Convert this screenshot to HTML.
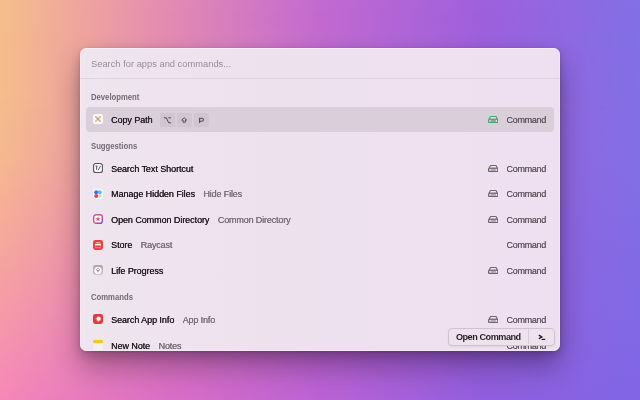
<!DOCTYPE html>
<html><head><meta charset="utf-8">
<style>
html,body{margin:0;padding:0;width:640px;height:400px;overflow:hidden}
body{position:relative;font-family:"Liberation Sans",sans-serif;font-variant-ligatures:none;font-kerning:normal;
background:linear-gradient(to right,#F6BE8B 0%,#E58DB0 25%,#C26AD0 50%,#9E60DC 75%,#8270E6 100%)}
.bgb{position:absolute;left:0;top:0;width:640px;height:400px;
background:linear-gradient(to right,#F587B8 0%,#DA6EC4 25%,#BA62D4 50%,#925EDE 75%,#8066E4 100%);
-webkit-mask-image:linear-gradient(to bottom,rgba(0,0,0,0) 0%,rgba(0,0,0,0.02) 25%,rgba(0,0,0,0.1) 40%,rgba(0,0,0,0.24) 50%,rgba(0,0,0,0.6) 75%,#000 100%);mask-image:linear-gradient(to bottom,rgba(0,0,0,0) 0%,rgba(0,0,0,0.02) 25%,rgba(0,0,0,0.1) 40%,rgba(0,0,0,0.24) 50%,rgba(0,0,0,0.6) 75%,#000 100%)}
.panel{will-change:transform;position:absolute;left:80px;top:48px;width:480px;height:302.5px;border-radius:6.5px;background:linear-gradient(to right,#EFE5EE 0%,#EEE1EE 40%,#EFE0F1 100%);
box-shadow:0 16px 28px rgba(20,0,20,0.32),0 4px 12px rgba(30,0,30,0.2),0 1px 3px rgba(20,0,20,0.15),inset 0 0 0 0.75px rgba(255,255,255,0.45);overflow:hidden}
.t{position:absolute;white-space:nowrap;line-height:20px;height:20px}
.search{left:10.6px;top:5.9px;font-size:9.7px;color:#978D97;letter-spacing:0;transform:scaleX(0.963);transform-origin:0 50%}
.div{position:absolute;left:0;top:30px;width:480px;height:1px;background:#DFD1DF}
.sec{font-size:8.2px;font-weight:700;color:#746A74;letter-spacing:0;left:10.5px;transform:scaleX(0.94);transform-origin:0 50%}
.row{position:absolute;left:6.75px;width:467px;height:25.5px}
.selbg{position:absolute;left:6.1px;top:58.9px;width:467.6px;height:25.2px;background:#DACEDA;border-radius:4px}
.row .ic{position:absolute;left:6.25px;top:7.3px;width:10px;height:10px}
.row .tt{position:absolute;left:24.25px;top:1px;line-height:25.5px;font-size:9px;color:#1E181E;white-space:nowrap;letter-spacing:-0.06px;text-shadow:0.2px 0 0 #1E181E}
.row .st{font-size:9px;color:#776D77;text-shadow:0.1px 0 0 #776D77;letter-spacing:-0.15px;margin-left:8.5px}
.row .cm{position:absolute;left:419.75px;top:1px;line-height:25.5px;font-size:9px;color:#625862;white-space:nowrap;letter-spacing:-0.3px;text-shadow:0.12px 0 0 #625862}
.row .ext{position:absolute;left:401px;top:9px;width:10.5px;height:7.2px}
.kc{position:absolute;top:6.5px;width:14.75px;height:13.6px;background:#D1C5D1;border-radius:2px;font-size:8px;color:#5A525A;text-align:center;line-height:13px}
.kc svg{display:block;position:absolute;left:0;top:0.6px}
.btn{position:absolute;left:367.6px;top:280px;width:107px;height:17.5px;box-sizing:border-box;border:1px solid #CFC3CF;border-radius:4px;background:#EEE2EE;box-shadow:0 1px 2px rgba(0,0,0,0.06)}
.btn .l{position:absolute;left:7.3px;top:1.4px;line-height:15.5px;font-size:9.1px;font-weight:700;color:#231C23;letter-spacing:-0.45px}
.btn .sep{position:absolute;left:79.65px;top:0;width:1px;height:15.25px;background:#D8CCD8}
.btn .r{position:absolute;left:88px;top:0;line-height:15.25px;font-size:8px;font-weight:700;color:#231C23}
</style></head><body>
<div class="bgb"></div>
<div class="panel">
  <div class="t search">Search for apps and commands...</div>
  <div class="div"></div>

  <div class="t sec" style="top:40.2px">Development</div>
  <div class="selbg"></div>
  <div class="row sel" style="top:58.75px">
    <svg class="ic" viewBox="0 0 10 10"><rect x="0" y="0" width="10" height="10" rx="2" fill="#FBF8FB"/><path d="M2.8 2.8 L7.2 7.2" stroke="#A8ACBC" stroke-width="1.5" stroke-linecap="round"/><path d="M2.6 7.4 L7.4 2.6" stroke="#F6BC70" stroke-width="1.7" stroke-linecap="round"/><circle cx="5" cy="5" r="0.8" fill="#DA7068"/></svg>
    <div class="tt">Copy Path</div>
    <div class="kc" style="left:73.65px"><svg viewBox="0 0 14.75 13" width="14.75" height="13"><path d="M3.9 3.8 H6.3 L8.7 8.8 H10.9 M8.4 3.8 H10.9" fill="none" stroke="#4E464E" stroke-width="1"/></svg></div>
    <div class="kc" style="left:90.65px"><svg viewBox="0 0 14.75 13" width="14.75" height="13"><path d="M7.2 3.75 L9.7 6.0 H8.35 V8.25 H6.05 V6.0 H4.7 Z" fill="none" stroke="#4A424A" stroke-width="0.85" stroke-linejoin="miter" stroke-miterlimit="10"/></svg></div>
    <div class="kc" style="left:107.55px"><svg viewBox="0 0 14.75 13" width="14.75" height="13"><path d="M5.6 9.0 V4.3 H7.6 Q9.4 4.3 9.4 5.75 Q9.4 7.2 7.6 7.2 H5.6" fill="none" stroke="#504850" stroke-width="1.1"/></svg></div>
    <svg class="ext" viewBox="0 0 10.5 7.2"><path d="M2.5 0.55 H8 L9.5 3.3 H1 Z" fill="#F3ECF3" fill-opacity="0.6" stroke="#4BA85E" stroke-width="1.1" stroke-linejoin="round"/><rect x="0.55" y="3.3" width="9.4" height="3.35" rx="1.1" fill="#A896A8" stroke="#4BA85E" stroke-width="1.1"/><rect x="1.5" y="4.1" width="1.2" height="1.4" fill="#F6F0F6"/><rect x="7.8" y="4.1" width="1.2" height="1.4" fill="#F6F0F6"/></svg>
    <div class="cm">Command</div>
  </div>

  <div class="t sec" style="top:88.7px">Suggestions</div>
  <div class="row" style="top:107.75px">
    <svg class="ic" viewBox="0 0 10 10"><rect x="0.55" y="0.55" width="8.9" height="8.9" rx="2.3" fill="#FBF8FB" stroke="#5A5460" stroke-width="1.1"/><path d="M2.5 3.1 H4.7 M3.6 3.1 V6.9 M7.5 2.9 L5.3 7.1" stroke="#5E5964" stroke-width="1" fill="none"/></svg>
    <div class="tt">Search Text Shortcut</div>
    <svg class="ext" viewBox="0 0 10.5 7.2"><path d="M2.5 0.55 H8 L9.5 3.3 H1 Z" fill="#F3ECF3" fill-opacity="0.6" stroke="#6E666E" stroke-width="1.1" stroke-linejoin="round"/><rect x="0.55" y="3.3" width="9.4" height="3.35" rx="1.1" fill="#B4A8B4" stroke="#6E666E" stroke-width="1.1"/><rect x="1.5" y="4.1" width="1.2" height="1.4" fill="#F6F0F6"/><rect x="7.8" y="4.1" width="1.2" height="1.4" fill="#F6F0F6"/></svg>
    <div class="cm">Command</div>
  </div>
  <div class="row" style="top:133.25px">
    <svg class="ic" viewBox="0 0 10 10"><rect x="0" y="0" width="10" height="10" rx="2" fill="#FBF8FB"/><circle cx="3.2" cy="3.3" r="2" fill="#1E7CF0"/><circle cx="6.8" cy="3.3" r="2" fill="#58C2DA"/><circle cx="3.2" cy="6.9" r="2" fill="#EE4248"/><circle cx="6.8" cy="6.9" r="1.8" fill="#D8D6DC"/></svg>
    <div class="tt">Manage Hidden Files<span class="st">Hide Files</span></div>
    <svg class="ext" viewBox="0 0 10.5 7.2"><path d="M2.5 0.55 H8 L9.5 3.3 H1 Z" fill="#F3ECF3" fill-opacity="0.6" stroke="#6E666E" stroke-width="1.1" stroke-linejoin="round"/><rect x="0.55" y="3.3" width="9.4" height="3.35" rx="1.1" fill="#B4A8B4" stroke="#6E666E" stroke-width="1.1"/><rect x="1.5" y="4.1" width="1.2" height="1.4" fill="#F6F0F6"/><rect x="7.8" y="4.1" width="1.2" height="1.4" fill="#F6F0F6"/></svg>
    <div class="cm">Command</div>
  </div>
  <div class="row" style="top:158.75px">
    <svg class="ic" viewBox="0 0 10 10"><defs><linearGradient id="g1" x1="0" y1="0" x2="1" y2="1"><stop offset="0" stop-color="#A458E6"/><stop offset="0.45" stop-color="#EE4A6A"/><stop offset="1" stop-color="#6E50EE"/></linearGradient></defs><rect x="0.7" y="0.7" width="8.6" height="8.6" rx="2.4" fill="#FBF8FB" stroke="url(#g1)" stroke-width="1.4"/><path d="M5 2.6 L5.7 4.2 L7.4 4.3 L6.1 5.4 L6.5 7.1 L5 6.2 L3.5 7.1 L3.9 5.4 L2.6 4.3 L4.3 4.2 Z" fill="#E8506A"/></svg>
    <div class="tt">Open Common Directory<span class="st">Common Directory</span></div>
    <svg class="ext" viewBox="0 0 10.5 7.2"><path d="M2.5 0.55 H8 L9.5 3.3 H1 Z" fill="#F3ECF3" fill-opacity="0.6" stroke="#6E666E" stroke-width="1.1" stroke-linejoin="round"/><rect x="0.55" y="3.3" width="9.4" height="3.35" rx="1.1" fill="#B4A8B4" stroke="#6E666E" stroke-width="1.1"/><rect x="1.5" y="4.1" width="1.2" height="1.4" fill="#F6F0F6"/><rect x="7.8" y="4.1" width="1.2" height="1.4" fill="#F6F0F6"/></svg>
    <div class="cm">Command</div>
  </div>
  <div class="row" style="top:184.25px">
    <svg class="ic" viewBox="0 0 10 10"><rect x="0" y="0" width="10" height="10" rx="2.4" fill="#EA3F47"/><path d="M2.8 2.5 H7.2" stroke="#FFD8DA" stroke-width="0.7"/><path d="M1.9 3.7 H8.1 V5.2 Q7.35 6 6.6 5.2 Q5.8 6 5 5.2 Q4.2 6 3.4 5.2 Q2.65 6 1.9 5.2 Z" fill="#FFF2F2"/><path d="M2.6 6.4 V7.6 H7.4 V6.4" fill="none" stroke="#FFB8BC" stroke-width="0.6"/></svg>
    <div class="tt">Store<span class="st">Raycast</span></div>
    <div class="cm">Command</div>
  </div>
  <div class="row" style="top:209.75px">
    <svg class="ic" viewBox="0 0 10 10"><defs><linearGradient id="g2" x1="0" y1="0" x2="0" y2="1"><stop offset="0" stop-color="#A8A4AC"/><stop offset="1" stop-color="#CCC8CE"/></linearGradient></defs><rect x="0" y="0" width="10" height="10" rx="2.4" fill="url(#g2)"/><circle cx="5" cy="5.4" r="3.6" fill="#FAF9FA"/><path d="M2.9 4.3 L5 5.9 L7.1 4.3" fill="none" stroke="#7E7A80" stroke-width="0.8"/><path d="M4 6.6 Q5 7.9 6 6.6 Z" fill="#5E5A60"/><circle cx="5" cy="3.2" r="0.8" fill="#F07060"/></svg>
    <div class="tt">Life Progress</div>
    <svg class="ext" viewBox="0 0 10.5 7.2"><path d="M2.5 0.55 H8 L9.5 3.3 H1 Z" fill="#F3ECF3" fill-opacity="0.6" stroke="#6E666E" stroke-width="1.1" stroke-linejoin="round"/><rect x="0.55" y="3.3" width="9.4" height="3.35" rx="1.1" fill="#B4A8B4" stroke="#6E666E" stroke-width="1.1"/><rect x="1.5" y="4.1" width="1.2" height="1.4" fill="#F6F0F6"/><rect x="7.8" y="4.1" width="1.2" height="1.4" fill="#F6F0F6"/></svg>
    <div class="cm">Command</div>
  </div>

  <div class="t sec" style="top:239.6px">Commands</div>
  <div class="row" style="top:259px">
    <svg class="ic" viewBox="0 0 10 10"><rect x="0" y="0" width="10" height="10" rx="2.4" fill="#E8383E"/><circle cx="5.6" cy="4.8" r="2.2" fill="#FFF4F4"/><path d="M2.2 4.6 L4 6.4 L6 8" stroke="#FFB0B0" stroke-width="0.6" fill="none"/></svg>
    <div class="tt">Search App Info<span class="st">App Info</span></div>
    <svg class="ext" viewBox="0 0 10.5 7.2"><path d="M2.5 0.55 H8 L9.5 3.3 H1 Z" fill="#F3ECF3" fill-opacity="0.6" stroke="#6E666E" stroke-width="1.1" stroke-linejoin="round"/><rect x="0.55" y="3.3" width="9.4" height="3.35" rx="1.1" fill="#B4A8B4" stroke="#6E666E" stroke-width="1.1"/><rect x="1.5" y="4.1" width="1.2" height="1.4" fill="#F6F0F6"/><rect x="7.8" y="4.1" width="1.2" height="1.4" fill="#F6F0F6"/></svg>
    <div class="cm">Command</div>
  </div>
  <div class="row" style="top:284.5px">
    <svg class="ic" viewBox="0 0 10 10" style="top:7px"><rect x="0" y="0.5" width="10" height="9.5" rx="1.8" fill="#F4F0EC"/><rect x="0" y="0" width="10" height="3.2" rx="1.4" fill="#F9C718"/></svg>
    <div class="tt">New Note<span class="st">Notes</span></div>
    <div class="cm">Command</div>
  </div>

  <div class="btn"><span class="l">Open Command</span><span class="sep"></span><svg class="r" viewBox="0 0 10 8" style="position:absolute;left:89.4px;top:4.9px;width:10px;height:8px"><path d="M0.8 1.1 L3.9 2.9 L0.8 4.7" fill="none" stroke="#231C23" stroke-width="1.25" stroke-linejoin="miter"/><path d="M3.6 5.4 H7.2" stroke="#231C23" stroke-width="1.2"/></svg></div>
</div>
</body></html>
